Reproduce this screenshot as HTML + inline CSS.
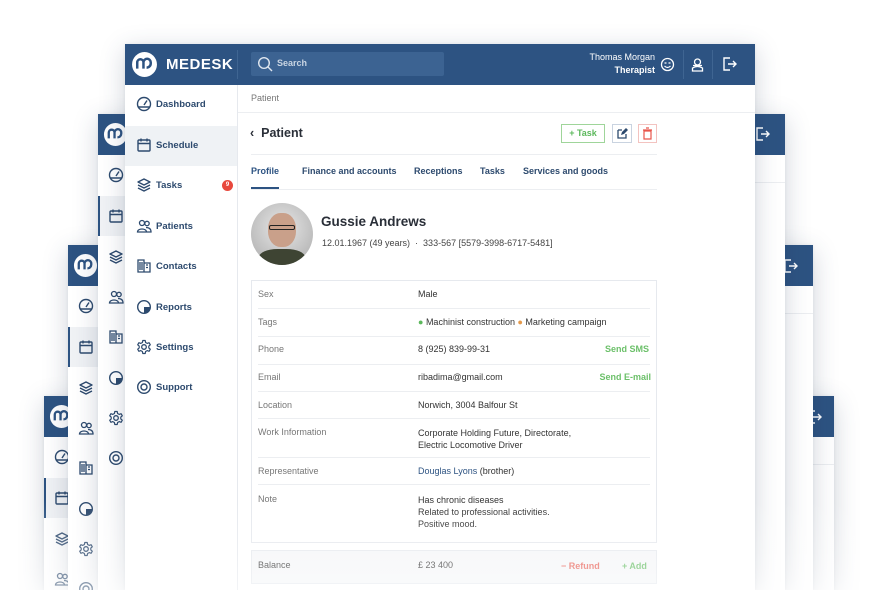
<!DOCTYPE html>
<html><head><meta charset="utf-8"><style>
*{box-sizing:border-box;margin:0;padding:0}
html,body{width:880px;height:590px;overflow:hidden}
body{background:#fff;font-family:"Liberation Sans",sans-serif;position:relative;color:#333}
.win{position:absolute;background:#fff;box-shadow:0 6px 24px rgba(40,60,90,.22),0 0 3px rgba(40,60,90,.08);bottom:0}
.hdr{position:absolute;left:0;right:0;top:0;height:41px;background:#2d5382}
.side{position:absolute;left:0;top:41px;bottom:0;background:#fff;border-right:1px solid #e6e9ee}
.ic{position:absolute;width:16px;height:16px}
.t{position:absolute;white-space:nowrap}
.nav{font-size:9.5px;font-weight:bold;color:#2d4a6e}
.lbl{font-size:9px;color:#777}
.val{font-size:9px;color:#333}
.sep{position:absolute;height:1px;background:#eceef1}
</style></head><body>
<svg width="0" height="0" style="position:absolute">
<defs>
<symbol id="dash" viewBox="0 0 16 16"><circle cx="8" cy="8" r="6.5" fill="none" stroke="#2d4a6e" stroke-width="1.4"/><path d="M8 9L11 4.5M2 11h12" stroke="#2d4a6e" stroke-width="1.4" fill="none"/></symbol>
<symbol id="cal" viewBox="0 0 16 16"><rect x="2" y="3" width="12" height="11" rx="1" fill="none" stroke="#2d4a6e" stroke-width="1.4"/><path d="M2 6.5h12M5 1.5v3M11 1.5v3" stroke="#2d4a6e" stroke-width="1.4"/></symbol>
<symbol id="task" viewBox="0 0 16 16"><path d="M8 2L14 5 8 8 2 5z M2 8l6 3 6-3 M2 11l6 3 6-3" fill="none" stroke="#2d4a6e" stroke-width="1.4" stroke-linejoin="round"/></symbol>
<symbol id="pat" viewBox="0 0 16 16"><circle cx="6" cy="5" r="2.5" fill="none" stroke="#2d4a6e" stroke-width="1.3"/><circle cx="11" cy="5.5" r="2.2" fill="none" stroke="#2d4a6e" stroke-width="1.3"/><path d="M1.5 14c0-4 9-4 9 0zM10 9.5c3 0 5 1 5 4.5h-4" fill="none" stroke="#2d4a6e" stroke-width="1.3"/></symbol>
<symbol id="cont" viewBox="0 0 16 16"><path d="M2 14V2h6v12zM8 5h6v9H8M4 4v8M6 4v8M10 7h2M10 9.5h2" fill="none" stroke="#2d4a6e" stroke-width="1.3"/></symbol>
<symbol id="rep" viewBox="0 0 16 16"><circle cx="8" cy="8" r="6.3" fill="none" stroke="#2d4a6e" stroke-width="1.4"/><path d="M8 8V2A6 6 0 0 1 14 8z" fill="#2d4a6e" transform="rotate(90 8 8)"/></symbol>
<symbol id="set" viewBox="0 0 16 16"><circle cx="8" cy="8" r="2.3" fill="none" stroke="#2d4a6e" stroke-width="1.3"/><path d="M6.8 1.5h2.4l.4 2 1.6.9 1.9-.7 1.2 2.1-1.5 1.3v1.8l1.5 1.3-1.2 2.1-1.9-.7-1.6.9-.4 2H6.8l-.4-2-1.6-.9-1.9.7-1.2-2.1 1.5-1.3V7.1L1.7 5.8l1.2-2.1 1.9.7 1.6-.9z" fill="none" stroke="#2d4a6e" stroke-width="1.2" stroke-linejoin="round"/></symbol>
<symbol id="sup" viewBox="0 0 16 16"><circle cx="8" cy="8" r="6.3" fill="none" stroke="#2d4a6e" stroke-width="1.4"/><circle cx="8" cy="8" r="3" fill="none" stroke="#2d4a6e" stroke-width="1.4"/></symbol>
<symbol id="logo" viewBox="0 0 26 26"><circle cx="13" cy="13" r="12" fill="#fff"/><path d="M6 17v-6a3 3 0 0 1 6 0v6M12 11a3.5 3.5 0 0 1 7 0v1a4 4 0 0 1-4 4" fill="none" stroke="#2d5382" stroke-width="2.4"/></symbol>
<symbol id="out" viewBox="0 0 16 16"><path d="M9 2H3v12h6M7 8h8M12 5l3 3-3 3" fill="none" stroke="#fff" stroke-width="1.4"/></symbol>
</defs></svg>

<!-- window 4 -->
<div class="win" style="left:44px;top:396px;width:790px">
<div class="hdr"><svg style="position:absolute;left:5px;top:8px" width="25" height="25"><use href="#logo"/></svg><svg class="ic" style="left:762px;top:13px"><use href="#out"/></svg></div>
<div class="side" style="width:40px">
<div style="position:absolute;left:0;top:41px;width:40px;height:40px;background:#f0f2f5;border-left:2px solid #2d5382"></div>
<svg class="ic" style="left:10px;top:12px"><use href="#dash"/></svg>
<svg class="ic" style="left:10px;top:53px"><use href="#cal"/></svg>
<svg class="ic" style="left:10px;top:94px"><use href="#task"/></svg>
<svg class="ic" style="left:10px;top:134px"><use href="#pat"/></svg>
</div>
<div class="sep" style="left:760px;right:0;top:68px"></div>
</div>
<!-- window 3 -->
<div class="win" style="left:68px;top:245px;width:745px">
<div class="hdr"><svg style="position:absolute;left:5px;top:8px" width="25" height="25"><use href="#logo"/></svg><svg class="ic" style="left:714px;top:13px"><use href="#out"/></svg></div>
<div class="side" style="width:40px">
<div style="position:absolute;left:0;top:41px;width:40px;height:40px;background:#f0f2f5;border-left:2px solid #2d5382"></div>
<svg class="ic" style="left:10px;top:12px"><use href="#dash"/></svg>
<svg class="ic" style="left:10px;top:53px"><use href="#cal"/></svg>
<svg class="ic" style="left:10px;top:94px"><use href="#task"/></svg>
<svg class="ic" style="left:10px;top:134px"><use href="#pat"/></svg>
<svg class="ic" style="left:10px;top:174px"><use href="#cont"/></svg>
<svg class="ic" style="left:10px;top:215px"><use href="#rep"/></svg>
<svg class="ic" style="left:10px;top:255px"><use href="#set"/></svg>
<svg class="ic" style="left:10px;top:295px"><use href="#sup"/></svg>
</div>
<div class="sep" style="left:700px;right:0;top:68px"></div>
</div>
<!-- window 2 -->
<div class="win" style="left:98px;top:114px;width:687px">
<div class="hdr"><svg style="position:absolute;left:5px;top:8px" width="25" height="25"><use href="#logo"/></svg><svg class="ic" style="left:656px;top:12px"><use href="#out"/></svg></div>
<div class="side" style="width:40px">
<div style="position:absolute;left:0;top:41px;width:40px;height:40px;background:#f0f2f5;border-left:2px solid #2d5382"></div>
<svg class="ic" style="left:10px;top:12px"><use href="#dash"/></svg>
<svg class="ic" style="left:10px;top:53px"><use href="#cal"/></svg>
<svg class="ic" style="left:10px;top:94px"><use href="#task"/></svg>
<svg class="ic" style="left:10px;top:134px"><use href="#pat"/></svg>
<svg class="ic" style="left:10px;top:174px"><use href="#cont"/></svg>
<svg class="ic" style="left:10px;top:215px"><use href="#rep"/></svg>
<svg class="ic" style="left:10px;top:255px"><use href="#set"/></svg>
<svg class="ic" style="left:10px;top:295px"><use href="#sup"/></svg>
</div>
<div class="sep" style="left:640px;right:0;top:68px"></div>
</div>

<!-- main window -->
<div class="win" style="left:125px;top:44px;width:630px">
<div class="hdr">
<svg style="position:absolute;left:6px;top:7px" width="27" height="27"><use href="#logo"/></svg>
<div class="t" style="left:41px;top:12px;color:#fff;font-weight:bold;font-size:15px;letter-spacing:.5px">MEDESK</div>
<div style="position:absolute;left:112px;top:6px;width:1px;height:29px;background:#3f6592"></div>
<div style="position:absolute;left:126px;top:8px;width:193px;height:24px;background:#3c6392;border-radius:2px"></div>
<svg style="position:absolute;left:132px;top:12px" width="16" height="16"><circle cx="7" cy="7" r="5.3" fill="none" stroke="#dfe6ef" stroke-width="1.4"/><path d="M11 11l4 4" stroke="#dfe6ef" stroke-width="1.4"/></svg>
<div class="t" style="left:152px;top:14px;color:#c9d5e3;font-size:9px;font-weight:bold">Search</div>
<div class="t" style="right:100px;top:8px;color:#fff;font-size:9px;text-align:right">Thomas Morgan</div>
<div class="t" style="right:100px;top:21px;color:#fff;font-size:9px;font-weight:bold">Therapist</div>
<svg style="position:absolute;left:535px;top:13px" width="15" height="15"><circle cx="7.5" cy="7.5" r="6" fill="none" stroke="#fff" stroke-width="1.3"/><path d="M4.5 6h2M8.5 6h2M4.5 9q3 3 6 0" stroke="#fff" stroke-width="1.2" fill="none"/></svg>
<div style="position:absolute;left:558px;top:6px;width:1px;height:29px;background:#3f6592"></div>
<svg style="position:absolute;left:565px;top:13px" width="15" height="15"><circle cx="7.5" cy="5" r="3" fill="none" stroke="#fff" stroke-width="1.3"/><path d="M2.5 14v-3q5-3 10 0v3zM3 8.5h9" stroke="#fff" stroke-width="1.3" fill="none"/></svg>
<div style="position:absolute;left:587px;top:6px;width:1px;height:29px;background:#3f6592"></div>
<svg class="ic" style="left:596px;top:12px"><use href="#out"/></svg>
</div>
<div class="side" style="width:113px">
<div style="position:absolute;left:0;top:41px;width:112px;height:40px;background:#eff2f5"></div>
<svg class="ic" style="left:11px;top:11px"><use href="#dash"/></svg><div class="t nav" style="left:31px;top:14px">Dashboard</div>
<svg class="ic" style="left:11px;top:52px"><use href="#cal"/></svg><div class="t nav" style="left:31px;top:55px">Schedule</div>
<svg class="ic" style="left:11px;top:92px"><use href="#task"/></svg><div class="t nav" style="left:31px;top:95px">Tasks</div>
<div style="position:absolute;left:97px;top:95px;width:11px;height:11px;border-radius:50%;background:#e8483d;color:#fff;font-size:6px;text-align:center;line-height:11px;font-weight:bold">9</div>
<svg class="ic" style="left:11px;top:133px"><use href="#pat"/></svg><div class="t nav" style="left:31px;top:136px">Patients</div>
<svg class="ic" style="left:11px;top:173px"><use href="#cont"/></svg><div class="t nav" style="left:31px;top:176px">Contacts</div>
<svg class="ic" style="left:11px;top:214px"><use href="#rep"/></svg><div class="t nav" style="left:31px;top:217px">Reports</div>
<svg class="ic" style="left:11px;top:254px"><use href="#set"/></svg><div class="t nav" style="left:31px;top:257px">Settings</div>
<svg class="ic" style="left:11px;top:294px"><use href="#sup"/></svg><div class="t nav" style="left:31px;top:297px">Support</div>
</div>
<!-- content -->
<div class="t" style="left:126px;top:49px;font-size:9px;color:#777">Patient</div>
<div class="sep" style="left:113px;right:0;top:68px"></div>
<div class="t" style="left:125px;top:82px;font-size:12.5px;font-weight:bold;color:#2a2f38">‹&nbsp; Patient</div>
<div style="position:absolute;left:436px;top:80px;width:44px;height:19px;border:1px solid #9fd59a;color:#5cb85c;font-size:9px;font-weight:bold;text-align:center;line-height:17px">+ Task</div>
<div style="position:absolute;left:487px;top:80px;width:20px;height:19px;border:1px solid #c9d3e0"><svg width="18" height="17"><path d="M5 5h4M5 5v8h8V9" stroke="#2d4a6e" stroke-width="1.3" fill="none"/><path d="M8 10l1-3 4-4 2 2-4 4z" fill="#2d4a6e"/></svg></div>
<div style="position:absolute;left:513px;top:80px;width:19px;height:19px;border:1px solid #f3c3c0"><svg width="17" height="17"><path d="M5 6h7v8H5zM4 5h9M7 3h3" stroke="#e8564c" stroke-width="1.2" fill="none"/></svg></div>
<div class="sep" style="left:126px;width:406px;top:110px"></div>
<div class="t" style="left:126px;top:122px;font-size:9px;font-weight:bold;color:#2d5382">Profile</div>
<div class="t" style="left:177px;top:122px;font-size:9px;font-weight:bold;color:#2d4a6e">Finance and accounts</div>
<div class="t" style="left:289px;top:122px;font-size:9px;font-weight:bold;color:#2d4a6e">Receptions</div>
<div class="t" style="left:355px;top:122px;font-size:9px;font-weight:bold;color:#2d4a6e">Tasks</div>
<div class="t" style="left:398px;top:122px;font-size:9px;font-weight:bold;color:#2d4a6e">Services and goods</div>
<div class="sep" style="left:126px;width:406px;top:145px"></div>
<div style="position:absolute;left:126px;top:143px;width:28px;height:2px;background:#2d5382"></div>
<div style="position:absolute;left:126px;top:159px;width:62px;height:62px;border-radius:50%;background:radial-gradient(circle at 50% 40%,#e8e8e8,#a9a9a9);overflow:hidden">
<div style="position:absolute;left:17px;top:10px;width:28px;height:34px;border-radius:45%;background:#c9a08a"></div>
<div style="position:absolute;left:18px;top:22px;width:26px;height:5px;border:1.5px solid #222;border-radius:2px"></div>
<div style="position:absolute;left:8px;top:46px;width:46px;height:20px;border-radius:40% 40% 0 0;background:#3e4433"></div>
</div>
<div class="t" style="left:196px;top:170px;font-size:13.5px;font-weight:bold;color:#2a2f38">Gussie Andrews</div>
<div class="t" style="left:197px;top:194px;font-size:9px;color:#444">12.01.1967 (49 years) &nbsp;·&nbsp; 333-567 [5579-3998-6717-5481]</div>
<div style="position:absolute;left:126px;top:236px;width:406px;height:263px;border:1px solid #e6e9ee"></div>
<div class="t lbl" style="left:133px;top:245px">Sex</div><div class="t val" style="left:293px;top:245px">Male</div>
<div class="sep" style="left:133px;width:392px;top:264px"></div>
<div class="t lbl" style="left:133px;top:273px">Tags</div><div class="t val" style="left:293px;top:273px"><span style="color:#5cb85c">●</span> Machinist construction <span style="color:#e59a4b">●</span> Marketing campaign</div>
<div class="sep" style="left:133px;width:392px;top:292px"></div>
<div class="t lbl" style="left:133px;top:300px">Phone</div><div class="t val" style="left:293px;top:300px">8 (925) 839-99-31</div><div class="t" style="right:106px;top:300px;font-size:9px;font-weight:bold;color:#6cc06a">Send SMS</div>
<div class="sep" style="left:133px;width:392px;top:320px"></div>
<div class="t lbl" style="left:133px;top:328px">Email</div><div class="t val" style="left:293px;top:328px">ribadima@gmail.com</div><div class="t" style="right:104px;top:328px;font-size:9px;font-weight:bold;color:#6cc06a">Send E-mail</div>
<div class="sep" style="left:133px;width:392px;top:347px"></div>
<div class="t lbl" style="left:133px;top:356px">Location</div><div class="t val" style="left:293px;top:356px">Norwich, 3004 Balfour St</div>
<div class="sep" style="left:133px;width:392px;top:374px"></div>
<div class="t lbl" style="left:133px;top:383px">Work Information</div><div class="t val" style="left:293px;top:383px;line-height:12px">Corporate Holding Future, Directorate,<br>Electric Locomotive Driver</div>
<div class="sep" style="left:133px;width:392px;top:413px"></div>
<div class="t lbl" style="left:133px;top:422px">Representative</div><div class="t val" style="left:293px;top:422px"><span style="color:#2d5382">Douglas Lyons</span> (brother)</div>
<div class="sep" style="left:133px;width:392px;top:440px"></div>
<div class="t lbl" style="left:133px;top:450px">Note</div><div class="t val" style="left:293px;top:450px;line-height:12px">Has chronic diseases<br>Related to professional activities.<br>Positive mood.</div>
<div style="position:absolute;left:126px;top:506px;width:406px;height:34px;border:1px solid #e6e9ee;background:#f5f6f8"></div>
<div class="t val" style="left:133px;top:516px">Balance</div><div class="t val" style="left:293px;top:516px">£ 23 400</div>
<div class="t" style="left:436px;top:517px;font-size:9px;font-weight:bold;color:#e8665c">− Refund</div>
<div class="t" style="left:497px;top:517px;font-size:9px;font-weight:bold;color:#6cc06a">+ Add</div>
</div>
<div style="position:absolute;left:0;right:0;top:500px;height:90px;background:linear-gradient(rgba(255,255,255,0),rgba(255,255,255,.25) 60%,rgba(255,255,255,.5))"></div>
</body></html>
